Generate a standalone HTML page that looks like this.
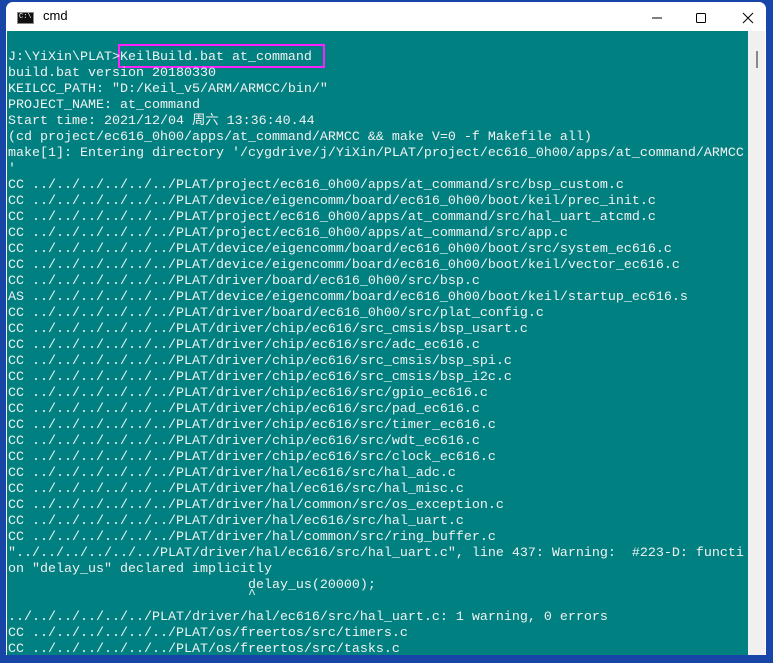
<!DOCTYPE html>
<html><head><meta charset="utf-8"><style>
html,body{margin:0;padding:0;width:773px;height:663px;overflow:hidden;background:#1846a8;}
.win{position:absolute;left:6px;top:2px;width:760px;height:653px;background:#fff;border-radius:7px 7px 0 0;}
.title{position:absolute;left:0;top:0;width:760px;height:29px;}
.icon{position:absolute;left:11px;top:10px;width:15px;height:10px;background:#111;border:1px solid #888;}
.icon span{position:absolute;left:1px;top:0;color:#fff;font:7px "Liberation Mono",monospace;}
.tt{position:absolute;left:37px;top:6px;font:13px "Liberation Sans",sans-serif;color:#000;}
.con{position:absolute;left:1px;top:29px;width:741px;height:624px;background:#008080;overflow:hidden;}
.sb{position:absolute;left:742px;top:29px;width:17px;height:624px;background:#f0f0f0;}
.thumb{position:absolute;left:8px;top:20px;width:2px;height:17px;background:#888;}
pre{position:absolute;left:1px;top:19px;margin:0;font:13.33px/16px "Liberation Mono","Noto Sans CJK SC",monospace;color:#f2f2f2;white-space:pre;}
.box{position:absolute;left:111px;top:13px;width:203px;height:20px;border:2px solid #ff20ff;}
.up{position:relative;top:-6px;}
</style></head><body>
<div class="win">
<div class="title"><div class="icon"><span>C:\</span></div><div class="tt">cmd</div>
<svg style="position:absolute;left:640px;top:9px" width="110" height="14"><path d="M6 7h10" stroke="#000" stroke-width="1"/><rect x="50.5" y="2.5" width="9" height="9" rx="1" fill="none" stroke="#000"/><path d="M97 2l10 10M107 2l-10 10" stroke="#000"/></svg>
</div>
<div class="con"><div class="box"></div><pre>J:\YiXin\PLAT&gt;KeilBuild.bat at_command
build.bat version 20180330
KEILCC_PATH: "D:/Keil_v5/ARM/ARMCC/bin/"
PROJECT_NAME: at_command
Start time: 2021/12/04 周六 13:36:40.44
(cd project/ec616_0h00/apps/at_command/ARMCC &amp;&amp; make V=0 -f Makefile all)
make[1]: Entering directory '/cygdrive/j/YiXin/PLAT/project/ec616_0h00/apps/at_command/ARMCC
'
CC ../../../../../../PLAT/project/ec616_0h00/apps/at_command/src/bsp_custom.c
CC ../../../../../../PLAT/device/eigencomm/board/ec616_0h00/boot/keil/prec_init.c
CC ../../../../../../PLAT/project/ec616_0h00/apps/at_command/src/hal_uart_atcmd.c
CC ../../../../../../PLAT/project/ec616_0h00/apps/at_command/src/app.c
CC ../../../../../../PLAT/device/eigencomm/board/ec616_0h00/boot/src/system_ec616.c
CC ../../../../../../PLAT/device/eigencomm/board/ec616_0h00/boot/keil/vector_ec616.c
CC ../../../../../../PLAT/driver/board/ec616_0h00/src/bsp.c
AS ../../../../../../PLAT/device/eigencomm/board/ec616_0h00/boot/keil/startup_ec616.s
CC ../../../../../../PLAT/driver/board/ec616_0h00/src/plat_config.c
CC ../../../../../../PLAT/driver/chip/ec616/src_cmsis/bsp_usart.c
CC ../../../../../../PLAT/driver/chip/ec616/src/adc_ec616.c
CC ../../../../../../PLAT/driver/chip/ec616/src_cmsis/bsp_spi.c
CC ../../../../../../PLAT/driver/chip/ec616/src_cmsis/bsp_i2c.c
CC ../../../../../../PLAT/driver/chip/ec616/src/gpio_ec616.c
CC ../../../../../../PLAT/driver/chip/ec616/src/pad_ec616.c
CC ../../../../../../PLAT/driver/chip/ec616/src/timer_ec616.c
CC ../../../../../../PLAT/driver/chip/ec616/src/wdt_ec616.c
CC ../../../../../../PLAT/driver/chip/ec616/src/clock_ec616.c
CC ../../../../../../PLAT/driver/hal/ec616/src/hal_adc.c
CC ../../../../../../PLAT/driver/hal/ec616/src/hal_misc.c
CC ../../../../../../PLAT/driver/hal/common/src/os_exception.c
CC ../../../../../../PLAT/driver/hal/ec616/src/hal_uart.c
CC ../../../../../../PLAT/driver/hal/common/src/ring_buffer.c
"../../../../../../PLAT/driver/hal/ec616/src/hal_uart.c", line 437: Warning:  #223-D: functi
on "delay_us" declared implicitly
                              delay_us(20000);
                              <span class="up">^</span>
../../../../../../PLAT/driver/hal/ec616/src/hal_uart.c: 1 warning, 0 errors
CC ../../../../../../PLAT/os/freertos/src/timers.c
CC ../../../../../../PLAT/os/freertos/src/tasks.c</pre></div>
<div class="sb"><div class="thumb"></div></div>
</div>
</body></html>
